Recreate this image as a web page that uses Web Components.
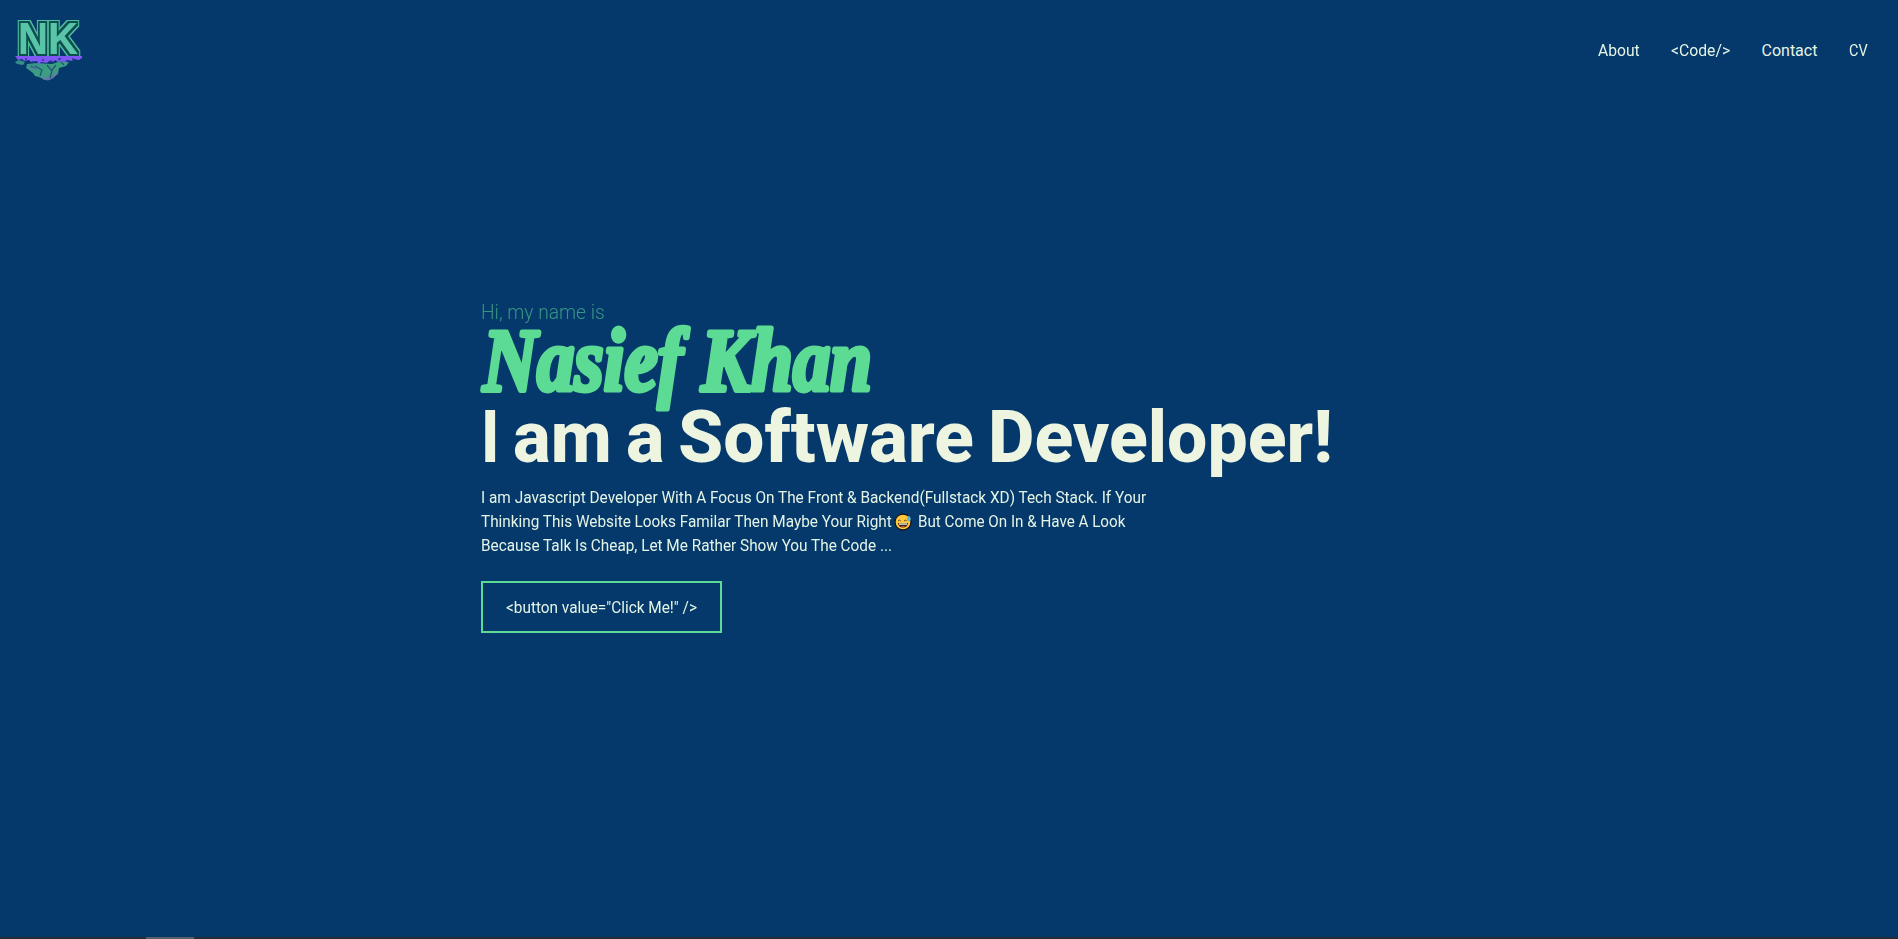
<!DOCTYPE html>
<html lang="en">
<head>
<meta charset="utf-8">
<title>Nasief Khan</title>
<style>
html,body{margin:0;height:100%;overflow:hidden;background:#05386b}
body{font-family:Roboto,"Open Sans",sans-serif;color:#e4f5e6}
</style>
</head>
<body>
<portfolio-page></portfolio-page>
<script>
const define = (name, html, ready) => {
  const t = document.createElement('template');
  t.innerHTML = html;
  customElements.define(name, class extends HTMLElement {
    constructor(){ super(); this.attachShadow({mode:'open'}).append(t.content.cloneNode(true)); }
    connectedCallback(){ if (ready) ready(this); }
  });
};

// Condenses its text horizontally to the width given in its "w" attribute.
define('fit-text', `<style>
:host{display:inline-block;white-space:pre;vertical-align:baseline}
span{display:inline-block;transform-origin:0 50%}
</style><span><slot></slot></span>`, el => {
  const s = el.shadowRoot.querySelector('span'), w = +el.getAttribute('w');
  el.style.width = w + 'px';
  s.style.transform = `scaleX(${w / s.offsetWidth})`;
});

define('brand-logo', `<style>
:host{display:block;width:72px;height:68px}svg{display:block;overflow:visible}
</style>
<svg width="72" height="68" viewBox="12 16 72 68">
<defs><filter id="ring" x="-20%" y="-20%" width="140%" height="140%">
<feMorphology in="SourceAlpha" operator="dilate" radius="3" result="o"/>
<feFlood flood-color="#4fbf9f"/><feComposite in2="o" operator="in" result="outer"/>
<feMorphology in="SourceAlpha" operator="dilate" radius="2" result="i"/>
<feFlood flood-color="#07504f"/><feComposite in2="i" operator="in" result="inner"/>
<feMerge><feMergeNode in="outer"/><feMergeNode in="inner"/><feMergeNode in="SourceGraphic"/></feMerge>
</filter>
<linearGradient id="r" x2="1" y2="1"><stop offset="0" stop-color="#348b8d"/><stop offset=".6" stop-color="#3ca17f"/><stop offset="1" stop-color="#6a67ae"/></linearGradient></defs>
<text x="18" y="54" font-family="Liberation Sans" font-weight="700" font-size="43.5" fill="#58c5a8" filter="url(#ring)"><tspan textLength="30" lengthAdjust="spacingAndGlyphs">N</tspan><tspan x="48" textLength="30" lengthAdjust="spacingAndGlyphs">K</tspan></text>
<path fill="url(#r)" d="M15 62l4-2 6 2-2 3-6-1zM27 64l10-1 15 1 9-3 8 1-3 4-7 2-1 6-6 4-4 2-5-1-4-2-4-1-2-3-4-3-3-2z"/>
<path d="M35 66l7 4-2 6M47 65l5 6-2 7M56 65l-4 5M61 62l3 3M31 66l5 3" fill="none" stroke="#21567b" stroke-width="1.3"/>
<path d="M43 79l5 1 5-2 5-5M29 67l8 2" fill="none" stroke="#7568c0" stroke-width="1"/>
<path fill="#8057f5" d="M15 56h67v2l-3 2-5-1-2 2-5-1-3 3-2-2-5 1-1-2-4 2-3-1-2 2-6-1-2 3-2-4-6 1-2-2-5 1-2-2-4 1z"/>
<path d="M25 59h2m5 3h2m8-2h2m6 1h2m6-2h3m5 2h2m4-2h2" stroke="#203e91" stroke-width="1.3"/>
</svg>`);

define('nav-link', `<style>:host{display:block;font-size:16px;line-height:24px}a{color:inherit;text-decoration:none}</style><a><slot></slot></a>`);

define('site-header', `<style>
:host{display:flex;justify-content:space-between;align-items:center;height:100px;padding:0 30px 0 12px;box-sizing:border-box}
nav{display:flex;gap:31.5px;padding-top:2px}
</style><brand-logo></brand-logo><nav>
<nav-link><fit-text w="42">About</fit-text></nav-link>
<nav-link><fit-text w="59">&lt;Code/&gt;</fit-text></nav-link>
<nav-link><fit-text w="56">Contact</fit-text></nav-link>
<nav-link><fit-text w="19">CV</fit-text></nav-link></nav>`);

define('sweat-smile', `<style>:host{display:inline-block;width:18px;height:18px;vertical-align:-4px;margin:0 6px 0 2px}svg{display:block}</style>
<svg width="18" height="18" viewBox="0 0 18 18"><circle cx="9" cy="9" r="8" fill="#ffc83d" stroke="#161719" stroke-width="1.3"/>
<path d="M4 8q1.300-2 2.800 0M10 8q1.300-2 2.800 0" fill="none" stroke="#5a3a12" stroke-width=".9"/>
<path d="M4 10h10c-.3 3-2.400 4.600-5 4.600s-4.700-1.600-5-4.600z" fill="#3b2413"/><path d="M5 10.400h8v1.300H5z" fill="#fff"/>
<path d="M6.500 13.500q2.500-1 5 0l-2.500 1z" fill="#e65b45"/><path d="M14.700 2.500c-1 1.900-1.600 2.600-1.600 3.700a1.900 1.900 0 0 0 3.800 0c0-1.100-1-2.300-2.200-3.700z" fill="#5ab5cb"/></svg>`);

define('outline-button', `<style>
:host{display:block}
button{display:block;width:241px;height:52px;margin:0;padding:1px 0 0 23px;border:2px solid #5cdb95;background:none;color:inherit;font:inherit;font-size:16px;text-align:left;line-height:47px}
</style><button><slot></slot></button>`);

define('script-name', `<style>:host{display:block;height:77px}svg{display:block;overflow:visible}
text{font-family:"Liberation Serif",serif;font-style:italic;font-weight:700;fill:#5cdb95;stroke:#5cdb95;stroke-width:5;stroke-linejoin:round}</style>
<svg width="400" height="77"><text x="2" y="62.500" font-size="88" textLength="389" lengthAdjust="spacingAndGlyphs">Nasief Khan</text></svg>`);

define('hero-intro', `<style>
:host{display:block;padding:199px 0 0 481px}
.hi{font-size:20px;line-height:26px;font-weight:300;color:#379683;height:28px}
h1{display:flex;margin:0;font-size:72px;line-height:67px;font-weight:800;color:#edf5e1;height:82px}
h1 fit-text+fit-text{margin-left:14px}
.copy{font-size:16px;line-height:24px;margin-bottom:23px}
.copy div{height:24px;white-space:nowrap}
</style>
<div class="hi"><fit-text w="124">Hi, my name is</fit-text></div>
<script-name></script-name>
<h1><fit-text w="18">I</fit-text><fit-text w="99">am</fit-text><fit-text w="38">a</fit-text><fit-text w="296">Software</fit-text><fit-text w="345">Developer!</fit-text></h1>
<div class="copy">
<div><fit-text w="665">I am Javascript Developer With A Focus On The Front &amp; Backend(Fullstack XD) Tech Stack. If Your</fit-text></div>
<div><fit-text w="411">Thinking This Website Looks Familar Then Maybe Your Right</fit-text><sweat-smile></sweat-smile><fit-text w="207">But Come On In &amp; Have A Look</fit-text></div>
<div><fit-text w="411">Because Talk Is Cheap, Let Me Rather Show You The Code ...</fit-text></div>
</div>
<outline-button><fit-text w="191">&lt;button value="Click Me!" /&gt;</fit-text></outline-button>`);

define('bottom-edge', `<style>:host{display:block;height:2px;background:#252c34;padding-left:146px}i{display:block;width:48px;height:2px;background:#58616a}</style><i></i>`);

define('portfolio-page', `<style>:host{display:flex;flex-direction:column;height:939px}hero-intro{flex:1}</style>
<site-header></site-header><hero-intro></hero-intro><bottom-edge></bottom-edge>`);
</script>
</body>
</html>
